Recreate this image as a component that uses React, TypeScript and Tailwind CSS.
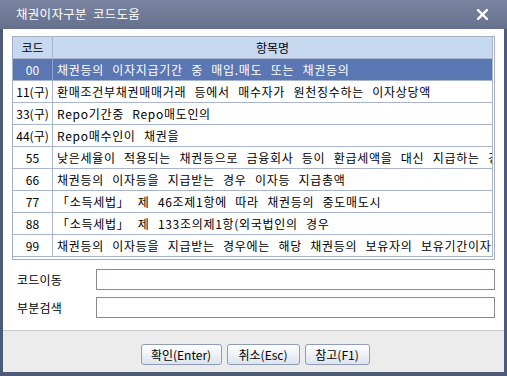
import React from "react";

const rows: { code: string; name: string }[] = [
  { code: "00", name: "채권등의 이자지급기간 중 매입.매도 또는 채권등의" },
  { code: "11(구)", name: "환매조건부채권매매거래 등에서 매수자가 원천징수하는 이자상당액" },
  { code: "33(구)", name: "Repo기간중 Repo매도인의" },
  { code: "44(구)", name: "Repo매수인이 채권을" },
  { code: "55", name: "낮은세율이 적용되는 채권등으로 금융회사 등이 환급세액을 대신 지급하는 경우" },
  { code: "66", name: "채권등의 이자등을 지급받는 경우 이자등 지급총액" },
  { code: "77", name: "「소득세법」 제 46조제1항에 따라 채권등의 중도매도시" },
  { code: "88", name: "「소득세법」 제 133조의제1항(외국법인의 경우" },
  { code: "99", name: "채권등의 이자등을 지급받는 경우에는 해당 채권등의 보유자의 보유기간이자상당액" },
];

export default function App() {
  return (
    <div className="w-[507px] h-[376px] bg-[#4d5a78] flex flex-col font-['Noto_Sans_CJK_KR','Noto_Sans',sans-serif] text-[12px] text-black [word-spacing:3px] overflow-hidden">
      {/* Title bar */}
      <div className="h-[29px] shrink-0 bg-gradient-to-b from-[#7a85a1] to-[#65708d] flex items-center justify-between pl-[16px] pr-[19px]">
        <span className="text-white text-[12.5px] leading-none tracking-[0.3px]">채권이자구분 코드도움</span>
        <svg width="11" height="11" viewBox="0 0 11 11">
          <path d="M1 1 L10 10 M10 1 L1 10" stroke="white" strokeWidth="2.4" strokeLinecap="square" />
        </svg>
      </div>

      {/* Body */}
      <div className="mx-[3px] flex-1 flex flex-col bg-white">
        <div className="pt-[7px] pl-[9px] pr-[9px] flex flex-col">
          {/* Grid */}
          <div className="w-[483px] border border-[#a5b0c4] pr-[1px] pb-[2px] flex flex-col">
            <div className="flex h-[22px] bg-[#c6d9f1] border-b border-[#a9b5ca]">
              <div className="w-[40px] border-r border-[#a9b5ca] flex items-center justify-center">코드</div>
              <div className="w-[440px] border-r border-[#a9b5ca] flex items-center justify-center">항목명</div>
            </div>
            {rows.map((r, i) => {
              const sel = i === 0;
              return (
                <div
                  key={r.code}
                  className={
                    sel
                      ? "flex h-[22px] bg-[#5b77b3] text-white border-b border-[#a9b5ca]"
                      : "flex h-[22px] border-b border-[#a9b5ca]"
                  }
                >
                  <div
                    className={
                      sel
                        ? "w-[40px] border-r border-[#8ea2cc] flex items-center justify-center whitespace-nowrap [word-spacing:0px]"
                        : "w-[40px] border-r border-[#a9b5ca] flex items-center justify-center whitespace-nowrap [word-spacing:0px]"
                    }
                  >
                    {r.code}
                  </div>
                  <div className="w-[440px] border-r border-[#a9b5ca] flex items-center pl-[4px] overflow-hidden whitespace-nowrap tracking-[0.7px] [word-spacing:5px]">
                    {r.name}
                  </div>
                </div>
              );
            })}
          </div>

          {/* Inputs */}
          <div className="mt-[9px] flex items-center pl-[5px]">
            <span className="w-[79px] tracking-[0.2px]">코드이동</span>
            <div className="w-[399px] h-[21px] border border-[#858b95] bg-white" />
          </div>
          <div className="mt-[7px] flex items-center pl-[5px]">
            <span className="w-[79px] tracking-[0.2px]">부분검색</span>
            <div className="w-[399px] h-[21px] border border-[#858b95] bg-white" />
          </div>
        </div>
        <div className="flex-1" />

        {/* Button bar */}
        <div className="h-[42px] shrink-0 border-t border-[#c9c9c9] bg-[#ececec] flex justify-center gap-[5px] pt-[13px] pl-[3px] [word-spacing:0px]">
          <button className="w-[81px] h-[21px] rounded-[3px] border border-[#8f9db6] bg-gradient-to-b from-white to-[#dde4ee] flex items-center justify-center leading-none">
            확인(Enter)
          </button>
          <button className="w-[73px] h-[21px] rounded-[3px] border border-[#8f9db6] bg-gradient-to-b from-white to-[#dde4ee] flex items-center justify-center leading-none">
            취소(Esc)
          </button>
          <button className="w-[65px] h-[21px] rounded-[3px] border border-[#8f9db6] bg-gradient-to-b from-white to-[#dde4ee] flex items-center justify-center leading-none">
            참고(F1)
          </button>
        </div>
      </div>
      <div className="h-[4px] shrink-0" />
    </div>
  );
}
